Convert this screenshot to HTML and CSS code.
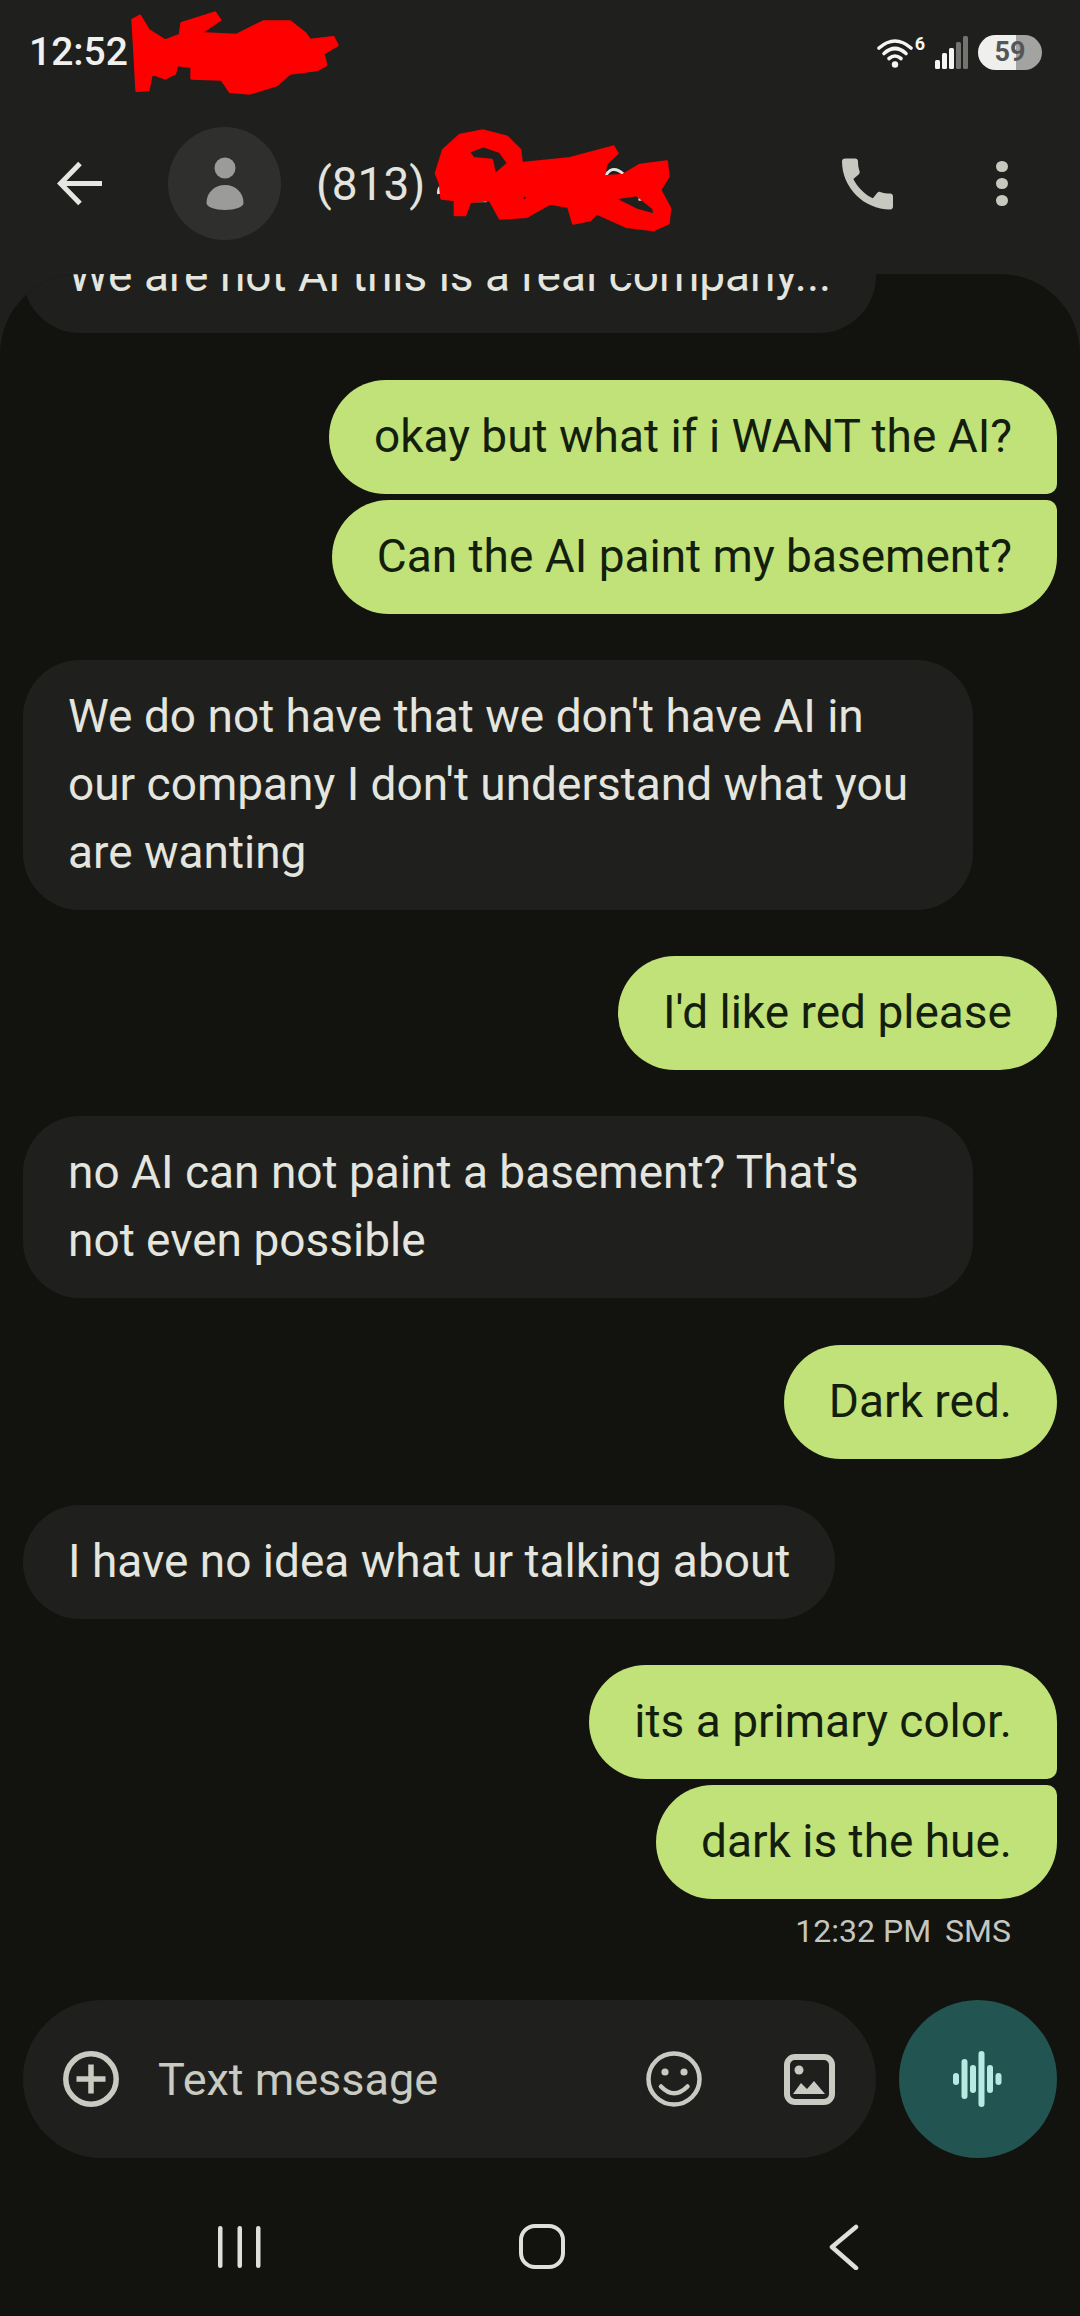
FILE: index.html
```html
<!DOCTYPE html>
<html lang="en">
<head>
    <meta charset="UTF-8">
    <meta name="viewport" content="width=device-width, initial-scale=1.0">
    <title>Messages</title>
    <link rel="stylesheet" href="styles.css">
</head>
<body>
    <div id="phone">

    <div id="top">
        <div class="status">
            <span class="time">12:52</span>
            <div class="status-icons">
                <svg class="wifi" width="36" height="31" viewBox="0 0 36 31" fill="none" stroke="#f5f5f3" stroke-width="3.6" stroke-linecap="round">
                    <path d="M2 11Q18 -3 34 11"/>
                    <path d="M7 16.500Q18 6.500 29 16.500"/>
                    <path d="M12 21.500Q18 16.500 24 21.500"/>
                    <circle cx="18" cy="27.500" r="3.200" fill="#f5f5f3" stroke="none"/>
                </svg>
                <span class="wifi-gen">6</span>
                <svg class="signal" width="33" height="33" viewBox="0 0 33 33">
                    <rect x="0" y="24" width="5" height="9" rx="1.500" fill="#f5f5f3"/>
                    <rect x="7" y="17" width="5" height="16" rx="1.500" fill="#f5f5f3"/>
                    <rect x="14" y="12" width="5" height="21" rx="1.500" fill="#f5f5f3"/>
                    <rect x="21" y="6" width="5" height="27" rx="1.500" fill="#73746f"/>
                    <rect x="28" y="0" width="5" height="33" rx="1.500" fill="#73746f"/>
                </svg>
                <div class="battery">59</div>
            </div>
        </div>
        <div class="appbar">
            <svg class="back" width="45" height="45" viewBox="0 0 45 45" fill="none" stroke="#e6e6e2" stroke-width="5">
                <path d="M23 2.500L3.500 22.500L23 42.500"/>
                <path d="M3.500 22.500H45"/>
            </svg>
            <div class="avatar">
                <svg width="38" height="54" viewBox="0 0 38 54" fill="#9b9c9a">
                    <circle cx="19" cy="11" r="10.500"/>
                    <path d="M0.500 46C0.500 35 9 28 19 28C29 28 37.500 35 37.500 46C37.500 50 29 53 19 53C9 53 0.500 50 0.500 46Z"/>
                </svg>
            </div>
            <div class="name">(813)</div>
            <svg class="call" width="51" height="52" viewBox="3 3 18 18" fill="#c7c8bf">
                <path d="M20.010 15.380c-1.230 0-2.420-.200-3.530-.560-.350-.120-.740-.030-1.010.240l-1.570 1.970c-2.830-1.350-5.480-3.900-6.890-6.830l1.950-1.660c.270-.280.350-.670.240-1.020-.370-1.110-.560-2.300-.560-3.530 0-.540-.450-.990-.990-.990H4.190C3.650 3 3 3.240 3 3.990 3 13.280 10.730 21 20.010 21c.710 0 .990-.630.990-1.180v-3.450c0-.540-.450-.990-.990-.990z"/>
            </svg>
            <div class="more"><span></span><span></span><span></span></div>
        </div>
    </div>

    <div id="thread">
        <div class="msg in">We are not AI this is a real company...</div>
        <div class="msg out tail-bottom">okay but what if i WANT the AI?</div>
        <div class="msg out tail-top">Can the AI paint my basement?</div>
        <div class="msg in">We do not have that we don't have AI in our company I don't understand what you are wanting</div>
        <div class="msg out">I'd like red please</div>
        <div class="msg in">no AI can not paint a basement? That's not even possible</div>
        <div class="msg out">Dark red.</div>
        <div class="msg in">I have no idea what ur talking about</div>
        <div class="msg out tail-bottom">its a primary color.</div>
        <div class="msg out tail-top">dark is the hue.</div>
        <div class="meta"><span>12:32 PM</span><span>SMS</span></div>
    </div>

    <div id="composer">
        <div class="field">
            <svg class="plus" width="56" height="56" viewBox="0 0 56 56" fill="none" stroke="#c9cac1" stroke-width="5.500">
                <circle cx="28" cy="28" r="25.200"/>
                <path d="M13.500 28H42.500M28 13.500V42.500"/>
            </svg>
            <span class="placeholder">Text message</span>
            <svg class="smile" width="56" height="56" viewBox="0 0 56 56" fill="none" stroke="#c9cac1" stroke-width="4.500">
                <circle cx="28" cy="28" r="25.500"/>
                <circle cx="19" cy="21" r="3.600" fill="#c9cac1" stroke="none"/>
                <circle cx="38" cy="21" r="3.600" fill="#c9cac1" stroke="none"/>
                <path d="M15 35.500Q28 49 41.500 35.500" stroke-linecap="round"/>
            </svg>
            <svg class="picture" width="51" height="51" viewBox="0 0 51 51" fill="#c9cac1">
                <rect x="3" y="3" width="45" height="45" rx="8" fill="none" stroke="#c9cac1" stroke-width="6"/>
                <circle cx="15" cy="16" r="4.500"/>
                <path d="M9 40L17 29L23 35L30 27L41 40Z"/>
            </svg>
        </div>
        <div class="voice">
            <svg width="50" height="56" viewBox="0 0 50 56" fill="#b6ebe4">
                <rect x="0" y="22" width="6" height="12" rx="3"/>
                <rect x="8.500" y="8" width="6" height="40" rx="3"/>
                <rect x="17" y="14" width="6" height="28" rx="3"/>
                <rect x="25.500" y="0" width="6" height="56" rx="3"/>
                <rect x="34" y="14" width="6" height="28" rx="3"/>
                <rect x="42.500" y="22" width="6" height="12" rx="3"/>
            </svg>
        </div>
    </div>

    <div id="nav">
        <svg width="44" height="45" viewBox="0 0 44 45" fill="#dfdfdb">
            <rect x="0" y="2" width="4.500" height="42" rx="2.200"/>
            <rect x="19.500" y="2" width="4.500" height="42" rx="2.200"/>
            <rect x="38" y="2" width="4.500" height="42" rx="2.200"/>
        </svg>
        <svg width="46" height="45" viewBox="0 0 46 45" fill="none" stroke="#dfdfdb" stroke-width="4">
            <rect x="2" y="2" width="42" height="41" rx="14"/>
        </svg>
        <svg width="30" height="46" viewBox="0 0 30 46" fill="none" stroke="#dfdfdb" stroke-width="4.500" stroke-linecap="round" stroke-linejoin="round">
            <path d="M27 3L3 23L27 44"/>
        </svg>
    </div>

    <!-- marker scribbles over the private bits -->
    <svg class="scribble one" width="230" height="90" viewBox="0 0 690 270" fill="#fe0000" stroke="#fe0000" stroke-width="8" stroke-linejoin="round">
        <path d="M38 30L60 18L85 60L135 92L180 75L185 40L285 8L300 30L240 70L350 75L430 35L510 35L555 70L570 90L640 82L652 105L610 130L618 165L590 180L510 190L470 225L390 250L330 245L305 208L215 205L215 170L170 165L165 190L135 205L95 190L85 240L50 242L45 150Z"/>
    </svg>
    <svg class="scribble two" width="260" height="120" viewBox="0 0 780 360">
        <g fill="none" stroke="#e3e3df" stroke-width="9">
            <path d="M552 178Q572 128 610 162"/>
            <path d="M92 158L108 132"/>
            <path d="M56 222Q54 208 62 200"/>
            <path d="M160 242H200"/>
            <path d="M660 215V242"/>
        </g>
        <path fill="#fe0000" stroke="#fe0000" stroke-width="8" stroke-linejoin="round" fill-rule="evenodd" d="M48 160L70 90L120 45L190 32L260 50L300 90L305 130L400 120L450 115L580 80L592 100L560 130L550 170L610 165L660 135L740 125L745 170L720 210L750 265L745 310L700 330L620 320L530 280L510 300L460 310L445 260L390 250L320 290L240 295L210 240L150 245L135 285L105 285L105 240L65 235L60 190Z M145 95L190 78L240 95L265 130L225 165L215 120L160 115Z M300 240L315 222L325 240Z M580 235L650 225L700 265L705 285L650 270Z"/>
    </svg>

    </div>
</body>
</html>
```

FILE: styles.css
```css
* {
    box-sizing: border-box;
}

body {
    margin: 0;
    background-color: #12130e;
    font-family: Roboto, "Noto Sans", sans-serif;
}

#phone {
    position: relative;
    width: 1080px;
    height: 2316px;
    display: flex;
    flex-direction: column;
    overflow: hidden;
    background-color: #1f201d;
}

/* status bar + contact bar */
#top {
    height: 274px;
    flex-shrink: 0;
}

.status {
    height: 104px;
    padding: 0 38px 0 29px;
    display: flex;
    align-items: center;
    justify-content: space-between;
}

.time {
    font-size: 39px;
    font-weight: 500;
    color: #f0f0ee;
}

.status-icons {
    display: flex;
    align-items: center;
}

.wifi-gen {
    align-self: flex-start;
    margin-left: 2px;
    font-size: 18px;
    font-weight: 700;
    line-height: 18px;
    color: #f5f5f3;
}

.signal {
    margin-left: 10px;
}

.battery {
    width: 64px;
    height: 35px;
    margin-left: 10px;
    border-radius: 18px;
    background: linear-gradient(to right, #efefed 59%, #a3a3a1 59%);
    color: #55565a;
    font-size: 27px;
    font-weight: 700;
    line-height: 35px;
    text-align: center;
}

.appbar {
    height: 170px;
    padding: 23px 0 34px 57px;
    display: flex;
    align-items: center;
}

.avatar {
    width: 113px;
    height: 113px;
    margin-left: 66px;
    border-radius: 50%;
    background-color: #2f302e;
    display: flex;
    align-items: center;
    justify-content: center;
}

.name {
    flex: 1;
    margin-left: 35px;
    font-size: 46px;
    color: #e3e3df;
}

.more {
    width: 12px;
    margin: 0 72px 0 103px;
    display: flex;
    flex-direction: column;
    gap: 5.500px;
}

.more span {
    height: 11.500px;
    border-radius: 50%;
    background-color: #c7c8bf;
}

/* conversation */
#thread {
    flex: 1;
    min-height: 0;
    padding: 0 23px 49px;
    display: flex;
    flex-direction: column;
    justify-content: flex-end;
    overflow: hidden;
    border-radius: 80px 80px 0 0;
    background-color: #12130e;
}

.msg {
    flex-shrink: 0;
    max-width: 950px;
    margin-top: 46.250px;
    padding: 22px 45px 24px;
    border-radius: 57px;
    font-size: 46px;
    line-height: 68px;
}

.msg.in {
    align-self: flex-start;
    background-color: #1f201d;
    color: #e4e5df;
}

.msg.out {
    align-self: flex-end;
    background-color: #c0e278;
    color: #141e0c;
}

.tail-bottom {
    border-bottom-right-radius: 10px;
}

.tail-top {
    margin-top: 6px;
    border-top-right-radius: 10px;
}

.meta {
    flex-shrink: 0;
    margin-top: 12px;
    padding-right: 46px;
    display: flex;
    justify-content: flex-end;
    gap: 14px;
    font-size: 32px;
    line-height: 40px;
    color: #c5c6c0;
}

/* bottom row */
#composer {
    flex-shrink: 0;
    padding: 0 23px;
    display: flex;
    gap: 23px;
    background-color: #12130e;
}

.field {
    flex: 1;
    height: 158px;
    padding: 0 41px 0 40px;
    border-radius: 79px;
    background-color: #1f201d;
    display: flex;
    align-items: center;
}

.placeholder {
    flex: 1;
    margin-left: 39px;
    font-size: 45px;
    color: #c9cac1;
}

.picture {
    margin-left: 82px;
}

.voice {
    width: 158px;
    height: 158px;
    border-radius: 50%;
    background-color: #225451;
    display: flex;
    align-items: center;
    justify-content: center;
}

#nav {
    height: 158px;
    flex-shrink: 0;
    padding: 66px 0 0 89px;
    display: grid;
    grid-template-columns: repeat(3, 302px);
    justify-items: center;
    align-items: start;
    background-color: #12130e;
}

.scribble {
    position: absolute;
}

.scribble.one {
    left: 120px;
    top: 10px;
}

.scribble.two {
    left: 420px;
    top: 120px;
}
```
